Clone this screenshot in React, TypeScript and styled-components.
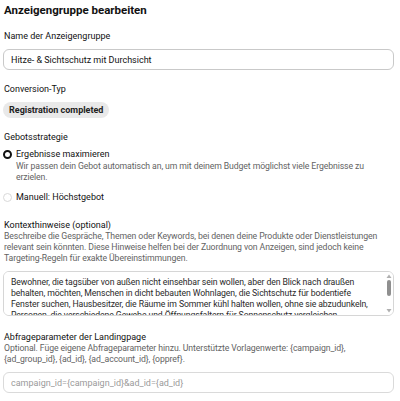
import React from "react";
import styled, { createGlobalStyle } from "styled-components";

const Global = createGlobalStyle`
  html, body { margin: 0; padding: 0; background: #fff; }
  body { font-family: Roboto, "Liberation Sans", Arial, sans-serif; color: #111; }
  * { box-sizing: border-box; }
`;

const Page = styled.div`
  width: 400px;
  padding: 3px 6px 0 3px;
  display: flex;
  flex-direction: column;
`;

const Title = styled.h1`
  margin: 0 0 0 1px;
  font-size: 11.5px;
  line-height: 14px;
  font-weight: 700;
  color: #111;
`;

const Section = styled.div<{ $top: number }>`
  display: flex;
  flex-direction: column;
  margin-top: ${(p) => p.$top}px;
`;

const Label = styled.div`
  font-size: 9px;
  line-height: 11px;
  color: #111;
  margin-left: 1px;
`;

const Help = styled.div`
  font-size: 8.7px;
  letter-spacing: -0.1px;
  line-height: 11px;
  color: #636363;
  margin-left: 1px;
`;

const TextInput = styled.input<{ $border: string }>`
  display: block;
  margin-top: 7px;
  height: 21px;
  width: 100%;
  border: 1px solid ${(p) => p.$border};
  border-radius: 6px;
  padding: 0 7px;
  font-family: inherit;
  font-size: 9px;
  color: #111;
  outline: none;
  background: #fff;
  &::placeholder { color: #9a9a9a; }
`;

const Chip = styled.span`
  align-self: flex-start;
  margin-top: 7px;
  height: 16px;
  padding: 0 6px;
  border-radius: 8px;
  background: #e9e9e9;
  font-size: 9px;
  font-weight: 700;
  line-height: 16px;
  color: #222;
`;

const RadioRow = styled.label`
  display: flex;
  align-items: center;
  gap: 4px;
  height: 11px;
  font-size: 9px;
  line-height: 11px;
  color: #111;
`;

const RadioDot = styled.span<{ $checked: boolean }>`
  width: 9px;
  height: 9px;
  border-radius: 50%;
  flex: none;
  background: #fff;
  border: ${(p) => (p.$checked ? "2.5px solid #111" : "1px solid #d9d9d9")};
`;

const Option = styled.div<{ $top: number }>`
  display: flex;
  flex-direction: column;
  margin-top: ${(p) => p.$top}px;
`;

const OptionHelp = styled(Help)`
  margin-left: 13px;
  margin-top: 1px;
`;

const AreaWrap = styled.div`
  position: relative;
  margin-top: 7px;
  height: 45px;
  border: 1px solid #d6d6d6;
  border-radius: 6px;
  overflow: hidden;
`;

const Area = styled.textarea`
  display: block;
  width: 100%;
  height: 100%;
  border: none;
  resize: none;
  outline: none;
  padding: 5px 10px 0 7px;
  font-family: inherit;
  font-size: 8.7px;
  letter-spacing: -0.1px;
  line-height: 11px;
  color: #2a2a2a;
  overflow: hidden;
`;

const Scroll = styled.div`
  position: absolute;
  right: 1px;
  top: 2px;
  bottom: 2px;
  width: 6px;
  display: flex;
  flex-direction: column;
  align-items: center;
  justify-content: space-between;
`;

const Thumb = styled.div`
  position: absolute;
  top: 6px;
  left: 1px;
  width: 4px;
  height: 16px;
  border-radius: 2px;
  background: #8f8f8f;
`;

const areaText = [
  "Bewohner, die tagsüber von außen nicht einsehbar sein wollen, aber den Blick nach draußen",
  "behalten, möchten, Menschen in dicht bebauten Wohnlagen, die Sichtschutz für bodentiefe",
  "Fenster suchen, Hausbesitzer, die Räume im Sommer kühl halten wollen, ohne sie abzudunkeln,",
  "Personen, die verschiedene Gewebe und Öffnungsfaltern für Sonnenschutz vergleichen.",
].join("\n");

export default function App() {
  return (
    <>
      <Global />
      <Page>
        <Title>Anzeigengruppe bearbeiten</Title>

        <Section $top={14}>
          <Label>Name der Anzeigengruppe</Label>
          <TextInput $border="#c9c9c9" defaultValue="Hitze- & Sichtschutz mit Durchsicht" />
        </Section>

        <Section $top={14}>
          <Label>Conversion-Typ</Label>
          <Chip>Registration completed</Chip>
        </Section>

        <Section $top={14}>
          <Label>Gebotsstrategie</Label>
          <Option $top={6}>
            <RadioRow>
              <RadioDot $checked />
              Ergebnisse maximieren
            </RadioRow>
            <OptionHelp>
              Wir passen dein Gebot automatisch an, um mit deinem Budget möglichst viele Ergebnisse zu
              <br />
              erzielen.
            </OptionHelp>
          </Option>
          <Option $top={9}>
            <RadioRow>
              <RadioDot $checked={false} />
              Manuell: Höchstgebot
            </RadioRow>
          </Option>
        </Section>

        <Section $top={17}>
          <Label>Kontexthinweise (optional)</Label>
          <Help>
            Beschreibe die Gespräche, Themen oder Keywords, bei denen deine Produkte oder Dienstleistungen
            <br />
            relevant sein könnten. Diese Hinweise helfen bei der Zuordnung von Anzeigen, sind jedoch keine
            <br />
            Targeting-Regeln für exakte Übereinstimmungen.
          </Help>
          <AreaWrap>
            <Area defaultValue={areaText} />
            <Scroll>
              <svg width="6" height="4" viewBox="0 0 6 4"><path d="M0.5 4 L3 0.5 L5.5 4 Z" fill="#b0b0b0" /></svg>
              <Thumb />
              <svg width="6" height="4" viewBox="0 0 6 4"><path d="M0.5 0 L3 3.5 L5.5 0 Z" fill="#b0b0b0" /></svg>
            </Scroll>
          </AreaWrap>
        </Section>

        <Section $top={16}>
          <Label>Abfrageparameter der Landingpage</Label>
          <Help>
            Optional. Füge eigene Abfrageparameter hinzu. Unterstützte Vorlagenwerte: {"{campaign_id}"},
            <br />
            {"{ad_group_id}"}, {"{ad_id}"}, {"{ad_account_id}"}, {"{oppref}"}.
          </Help>
          <TextInput $border="#dadada" placeholder="campaign_id={campaign_id}&ad_id={ad_id}" />
        </Section>
      </Page>
    </>
  );
}
